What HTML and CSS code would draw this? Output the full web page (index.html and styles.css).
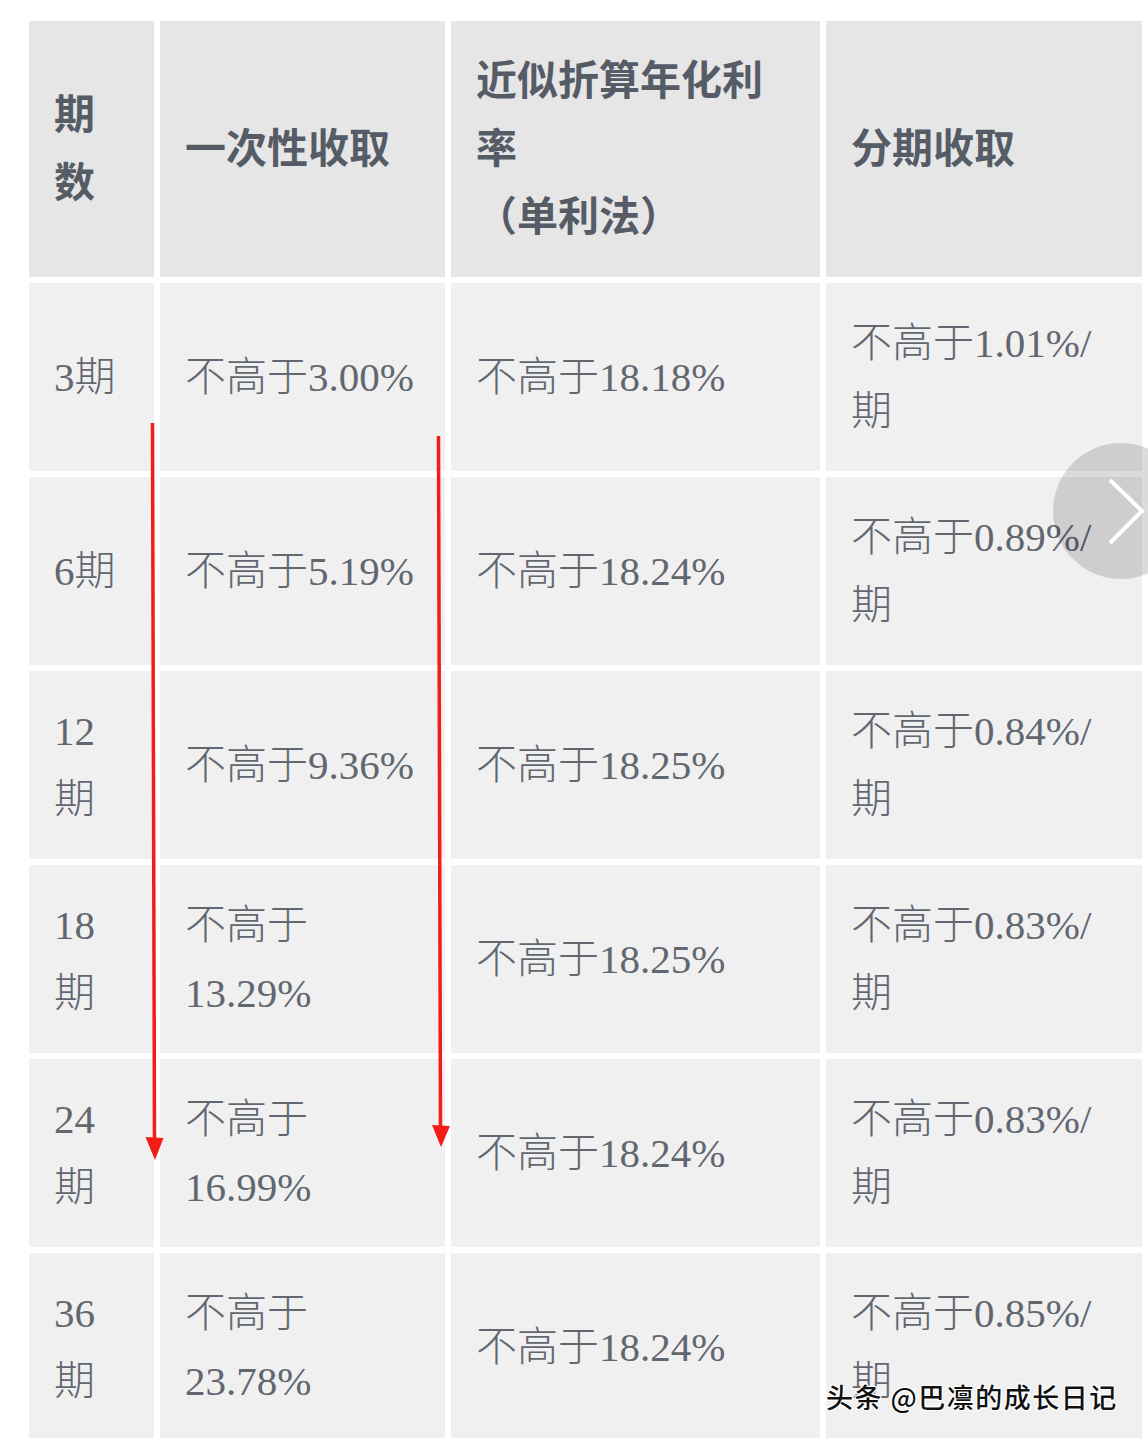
FILE: index.html
```html
<!DOCTYPE html>
<html lang="zh-CN">
<head>
<meta charset="utf-8">
<title>分期费率</title>
<link rel="stylesheet" href="styles.css">
</head>
<body>
<div class="page">
  <div class="rate-table">
    <div class="cell head">期数</div>
    <div class="cell head">一次性收取</div>
    <div class="cell head">近似折算年化利率<br>（单利法）</div>
    <div class="cell head">分期收取</div>

    <div class="cell">3期</div>
    <div class="cell">不高于3.00%</div>
    <div class="cell">不高于18.18%</div>
    <div class="cell">不高于1.01%/期</div>

    <div class="cell">6期</div>
    <div class="cell">不高于5.19%</div>
    <div class="cell">不高于18.24%</div>
    <div class="cell">不高于0.89%/期</div>

    <div class="cell">12期</div>
    <div class="cell">不高于9.36%</div>
    <div class="cell">不高于18.25%</div>
    <div class="cell">不高于0.84%/期</div>

    <div class="cell">18期</div>
    <div class="cell">不高于13.29%</div>
    <div class="cell">不高于18.25%</div>
    <div class="cell">不高于0.83%/期</div>

    <div class="cell">24期</div>
    <div class="cell">不高于16.99%</div>
    <div class="cell">不高于18.24%</div>
    <div class="cell">不高于0.83%/期</div>

    <div class="cell">36期</div>
    <div class="cell">不高于23.78%</div>
    <div class="cell">不高于18.24%</div>
    <div class="cell">不高于0.85%/期</div>
  </div>

  <svg class="arrows" width="1148" height="1438" viewBox="0 0 1148 1438" aria-hidden="true">
    <line x1="152.5" y1="423" x2="154.5" y2="1142" stroke="#f21d17" stroke-width="3.5"/>
    <polygon points="145.5,1137 163.5,1138 155,1160" fill="#f21d17"/>
    <line x1="438.5" y1="436" x2="440.5" y2="1129" stroke="#f21d17" stroke-width="3.5"/>
    <polygon points="432,1125 450,1126 441,1147" fill="#f21d17"/>
  </svg>

  <button class="next-btn" aria-label="下一页">
    <svg width="136" height="136" viewBox="0 0 136 136">
      <polyline points="57,37 89,68 57,100" fill="none" stroke="#ffffff" stroke-width="4"/>
    </svg>
  </button>

  <div class="watermark">头条 @巴凛的成长日记</div>
</div>
</body>
</html>
```

FILE: styles.css
```css
html, body {
  margin: 0;
  padding: 0;
  background: #ffffff;
}

body {
  width: 1148px;
  height: 1438px;
  overflow: hidden;
}

.page {
  position: relative;
  width: 1148px;
  height: 1438px;
  padding: 21px 0 0 29px;
  box-sizing: border-box;
}

.rate-table {
  display: grid;
  grid-template-columns: 125px 285px 369px 316px;
  grid-template-rows: 256px repeat(6, 188px);
  gap: 6px;
}

.cell {
  display: flex;
  align-items: center;
  padding: 0 26px 0 25px;
  background: #f0f0f1;
  color: #62676f;
  font-family: "Liberation Serif", "Noto Sans CJK SC", serif;
  font-weight: 300;
  font-size: 41px;
  line-height: 68px;
  overflow: hidden;
}

.cell.head {
  padding-bottom: 8px;
  background: #e6e6e7;
  color: #565c66;
  font-family: "Noto Sans CJK SC", sans-serif;
  font-weight: 700;
}

.arrows {
  position: absolute;
  top: 0;
  left: 0;
  pointer-events: none;
}

.next-btn {
  position: absolute;
  left: 1053px;
  top: 443px;
  width: 136px;
  height: 136px;
  padding: 0;
  border: none;
  border-radius: 50%;
  background: rgba(0, 0, 0, 0.14);
}

.next-btn svg {
  display: block;
}

.watermark {
  position: absolute;
  left: 826px;
  top: 1378px;
  font-family: "Noto Sans CJK SC", sans-serif;
  font-weight: 500;
  font-size: 27px;
  line-height: 38px;
  letter-spacing: 1.5px;
  color: #111111;
  white-space: nowrap;
  text-shadow: 1px 1px 0 #fff, -1px -1px 0 #fff, 1px -1px 0 #fff, -1px 1px 0 #fff, 0 1px 0 #fff, 0 -1px 0 #fff, 1px 0 0 #fff, -1px 0 0 #fff;
}
```
